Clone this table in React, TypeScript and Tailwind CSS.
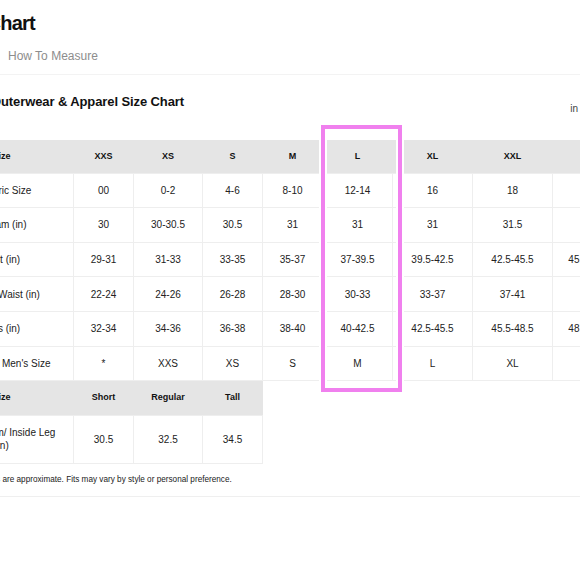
import React from "react"

// women's chart, the visible slice starts mid-page, so the blocks are pulled left
const SIZES = ["XXS", "XS", "S", "M", "L", "XL", "XXL", "1X"]
const COLS = [144, 60, 69, 60, 60, 70, 80, 80, 74]

const ROWS: { label: string; values: string[] }[] = [
  { label: "Numeric Size", values: ["00", "0-2", "4-6", "8-10", "12-14", "16", "18", "20"] },
  { label: "Inseam (in)", values: ["30", "30-30.5", "30.5", "31", "31", "31", "31.5", "32"] },
  { label: "Bust (in)", values: ["29-31", "31-33", "33-35", "35-37", "37-39.5", "39.5-42.5", "42.5-45.5", "45.5-48.5"] },
  { label: "Natural Waist (in)", values: ["22-24", "24-26", "26-28", "28-30", "30-33", "33-37", "37-41", "41"] },
  { label: "Hips (in)", values: ["32-34", "34-36", "36-38", "38-40", "40-42.5", "42.5-45.5", "45.5-48.5", "48.5-51.5"] },
  { label: "Equivalent Men's Size", values: ["*", "XXS", "XS", "S", "M", "L", "XL", "XXL"] },
]

const LENGTHS = [
  { name: "Short", value: "30.5" },
  { name: "Regular", value: "32.5" },
  { name: "Tall", value: "34.5" },
]

function Cols({ widths }: { widths: number[] }) {
  return (
    <colgroup>
      {widths.map((w, i) => (
        <col key={i} style={{ width: w }} />
      ))}
    </colgroup>
  )
}

export default function App() {
  return (
    <div className="relative h-[580px] w-[580px] overflow-hidden bg-white font-['Liberation_Sans',Arial,sans-serif] text-[#111]">
      <h1 className="ml-[-55px] mt-[11px] whitespace-nowrap text-[20px] font-bold leading-6 tracking-[-0.8px]">Size Chart</h1>

      <div className="mt-[13px] flex border-b border-[#f3f3f3] pb-[10px]">
        <span className="ml-[8px] text-[12px] leading-4 text-[#8d8d8d]">How To Measure</span>
      </div>

      <div className="mt-[18.5px] flex items-start justify-between">
        <h2 className="ml-[-9px] whitespace-nowrap text-[13px] font-bold leading-4 tracking-[-0.1px]">Outerwear &amp; Apparel Size Chart</h2>
        <span className="mr-[2px] mt-[7.5px] text-[10px] leading-4 text-[#444]">in</span>
      </div>

      <div className="ml-[-71px] mt-[23px]">
        <table className="table-fixed border-collapse" style={{ width: COLS.reduce((a, b) => a + b, 0) }}>
          <Cols widths={COLS} />
          <thead>
            <tr className="bg-[#e5e5e5]">
              <th className="h-[33px] px-[12px] text-center text-[9px] font-bold">Size</th>
              {SIZES.map((s) => (
                <th key={s} className="h-[33px] text-center text-[9px] font-bold">{s}</th>
              ))}
            </tr>
          </thead>
          <tbody>
            {ROWS.map((r) => (
              <tr key={r.label}>
                <td className="h-[34.67px] border border-[#eeeeee] px-[12px] text-center text-[10px] leading-[13px] text-[#222]">{r.label}</td>
                {r.values.map((v, i) => (
                  <td key={i} className="h-[34.67px] whitespace-nowrap border border-[#eeeeee] text-center text-[10px] text-[#222]">{v}</td>
                ))}
              </tr>
            ))}
          </tbody>
        </table>

        <table className="table-fixed border-collapse" style={{ width: 333 }}>
          <Cols widths={COLS.slice(0, 4)} />
          <thead>
            <tr className="bg-[#e5e5e5]">
              <th className="h-[34px] px-[12px] text-center text-[9px] font-bold">Size</th>
              {LENGTHS.map((l) => (
                <th key={l.name} className="h-[34px] text-center text-[9px] font-bold">{l.name}</th>
              ))}
            </tr>
          </thead>
          <tbody>
            <tr>
              <td className="h-[48px] border border-[#eeeeee] px-[12px] text-center text-[10px] leading-[13px] text-[#222]">Pant Inseam/ Inside Leg (in)</td>
              {LENGTHS.map((l) => (
                <td key={l.name} className="h-[48px] border border-[#eeeeee] text-center text-[10px] text-[#222]">{l.value}</td>
              ))}
            </tr>
          </tbody>
        </table>
      </div>

      <div className="border-b border-[#efefef] pb-[10px] pt-[10px]">
        <p className="ml-[-54px] whitespace-nowrap text-[8.2px] leading-3 text-[#1a1a1a]">
          Measurements are approximate. Fits may vary by style or personal preference.
        </p>
      </div>

      {/* highlight drawn over the L column */}
      <div className="absolute left-[321px] top-[125px] h-[267px] w-[81px] border-4 border-[#f080ee] shadow-[0_0_0_2px_#fff,inset_0_0_0_2px_#fff]" />
    </div>
  )
}
